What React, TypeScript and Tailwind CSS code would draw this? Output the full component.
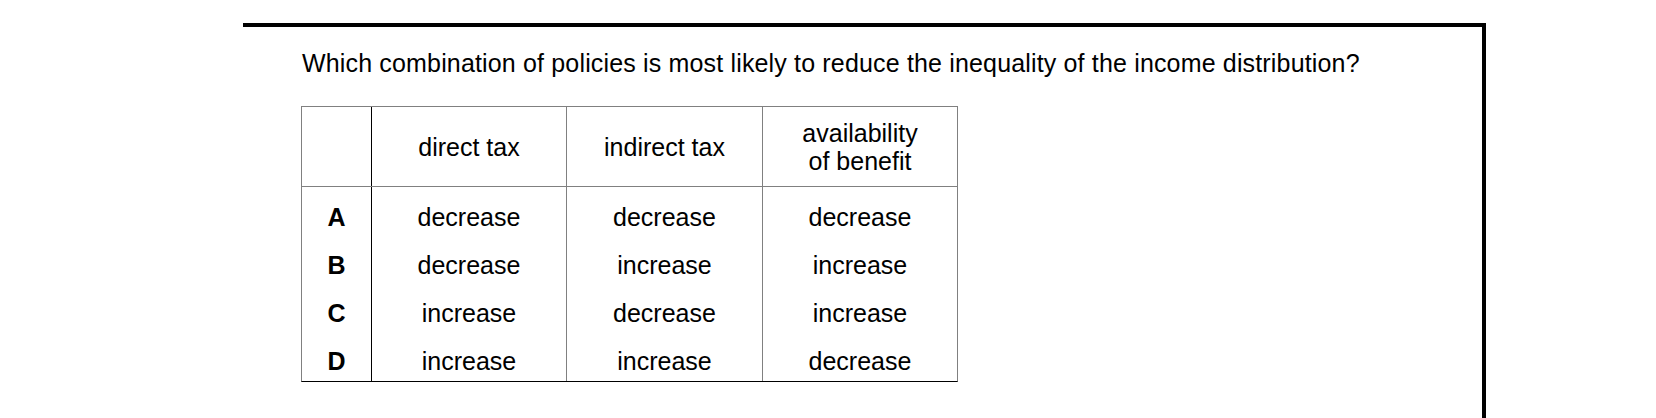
import React from "react";

const rows: [string, string, string, string][] = [
  ["A", "decrease", "decrease", "decrease"],
  ["B", "decrease", "increase", "increase"],
  ["C", "increase", "decrease", "increase"],
  ["D", "increase", "increase", "decrease"],
];

const font = { fontFamily: '"Liberation Sans", Arial, sans-serif' };

export default function App() {
  return (
    <div className="w-[1656px] h-[418px] overflow-hidden bg-white text-black" style={font}>
      <div className="ml-[243px] mt-[23px] w-[1243px] h-[395px] border-t-[4px] border-r-[4px] border-black pl-[58px] pt-[22px]">
        <p className="ml-[1px] text-[25px] leading-[28px] tracking-[0.16px] whitespace-nowrap">
          Which combination of policies is most likely to reduce the inequality of the income distribution?
        </p>
        <div className="mt-[29px] w-[657px] border border-[#808080] border-b-black text-[25px] leading-[28px]">
          <div className="flex h-[80px] border-b border-[#808080]">
            <div className="w-[70px] border-r border-black" />
            <div className="w-[195px] border-r border-[#808080] flex items-center justify-center text-center">
              direct tax
            </div>
            <div className="w-[196px] border-r border-[#808080] flex items-center justify-center text-center">
              indirect tax
            </div>
            <div className="w-[194px] flex items-center justify-center text-center">
              availability
              <br />
              of benefit
            </div>
          </div>
          {rows.map((r, i) => {
            const pad =
              i === 0 ? "pt-[16px] pb-[10px]" : i === 3 ? "pt-[10px] pb-[6px]" : "pt-[10px] pb-[10px]";
            return (
              <div key={r[0]} className="flex">
                <div className={`w-[70px] border-r border-black text-center font-bold ${pad}`}>{r[0]}</div>
                <div className={`w-[195px] border-r border-[#808080] text-center ${pad}`}>{r[1]}</div>
                <div className={`w-[196px] border-r border-[#808080] text-center ${pad}`}>{r[2]}</div>
                <div className={`w-[194px] text-center ${pad}`}>{r[3]}</div>
              </div>
            );
          })}
        </div>
      </div>
    </div>
  );
}
